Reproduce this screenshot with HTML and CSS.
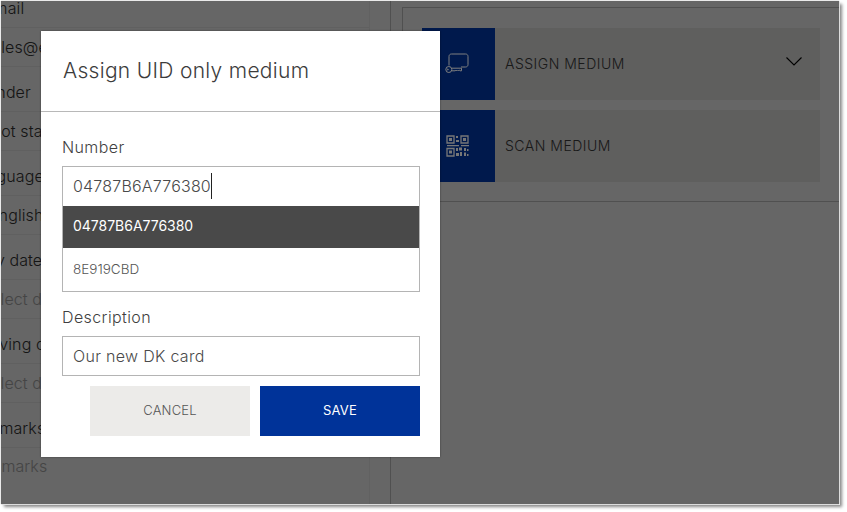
FILE: index.html
```html
<!DOCTYPE html>
<html lang="en">
<head>
<meta charset="utf-8">
<title>Assign UID only medium</title>
<link rel="stylesheet" href="styles.css">
</head>
<body>
<div class="window">
  <div class="page">
    <aside class="details">
      <div class="row first off-a">Email</div>
      <div class="row value off-b">sales@example.com</div>
      <div class="row label off-c">Gender</div>
      <div class="row value off-d">Not stated</div>
      <div class="row label off-e">Language</div>
      <div class="row value off-f">English</div>
      <div class="row label off-g">Expiry date</div>
      <div class="row value muted off-h">Select date</div>
      <div class="row label off-i">Leaving date</div>
      <div class="row value muted off-h">Select date</div>
      <div class="row label off-j">Remarks</div>
      <div class="row value muted last off-k">Remarks</div>
    </aside>
    <div class="gutter"></div>
    <main class="media">
      <div class="tiles">
        <div class="tile">
          <div class="tile-icon">
            <svg class="icon" viewBox="0 0 24 22" width="24" height="22" fill="none" stroke="#fff" stroke-width="1">
              <path d="M4 12.500V3.500C4 2 5 1 6.500 1h14C22 1 23 2 23 3.500v8c0 1.500-1 2.500-2.500 2.500H16"/>
              <circle cx="3.800" cy="16.500" r="3"/>
              <path d="M7 15.200h9.500v2.600h-1.500l-.8-.8-.8.8-.8-.8-.8.8-.8-.8-.8.8H7"/>
              <circle cx="2.800" cy="16.500" r=".5"/>
            </svg>
          </div>
          <div class="tile-label">ASSIGN MEDIUM</div>
          <svg class="chevron" viewBox="0 0 16 9" width="16" height="9" fill="none" stroke="#000" stroke-width="1.100"><path d="M.5.500 8 8l7.500-7.500"/></svg>
        </div>
        <div class="tile">
          <div class="tile-icon">
            <svg class="icon" viewBox="0 0 23 22" width="23" height="22" fill="none" stroke="#eee" stroke-width="1.300">
              <path d="M1 1h7v7H1zM15 1h7v7h-7zM1 13.500h7v7.500H1z"/>
              <path fill="#eee" stroke="none" d="M3 3h3v3H3zM17 3h3v3h-3zM3 15.500h3v3H3zM10 1h2v2h-2zM10 5h3v2h-3zM1 10h12v1.300H1zM15 10h8v1.300h-8zM10 13h2v3h-2zM13 12.500h3v3h-3zM10 18h3v3h-3zM14 17h2v4h-2zM18 13h2v3h-2zM18 17.500h2v3.500h-2zM21 14h1.500v2H21zM21 19h1.500v2H21z"/>
            </svg>
          </div>
          <div class="tile-label">SCAN MEDIUM</div>
        </div>
      </div>
    </main>
  </div>
  <div class="overlay"></div>
  <section class="modal">
    <header class="modal-head"><h1 class="modal-title">Assign UID only medium</h1></header>
    <div class="modal-body">
      <div class="field-label label-number">Number</div>
      <div class="combo">
        <div class="input"><span>04787B6A776380</span><span class="caret"></span></div>
        <div class="option active">04787B6A776380</div>
        <div class="option second">8E919CBD</div>
      </div>
      <div class="field-label label-desc">Description</div>
      <div class="input solo"><span>Our new DK card</span></div>
      <div class="actions">
        <div class="btn cancel">CANCEL</div>
        <div class="btn save">SAVE</div>
      </div>
    </div>
  </section>
</div>
</body>
</html>
```
FILE: styles.css
```css
* { box-sizing: border-box; }
html, body { margin: 0; height: 100%; background: #fff; overflow: hidden; }
body { padding: 1px 0 0 1px; font-family: Inter, "Noto Sans", sans-serif; font-weight: 300; color: #333; }

.window { position: relative; width: 838px; height: 503px; overflow: hidden; background: #cccccc; }
.window { box-shadow: 0 0 1px #888, 1px 1px 0 #eee, 3px 3px 3px #888; }
.page { display: flex; height: 100%; }

.details { width: 369px; flex: none; border-right: 1px solid #c2c2c2; overflow: hidden; }
.row { display: flex; align-items: center; white-space: nowrap; font-size: 16px; letter-spacing: .1px; color: #2a2a2a; border-bottom: 1px solid #c0c0c0; }
.first { height: 27px; align-items: flex-start; line-height: 15px; }
.value { height: 39px; }
.label { height: 45px; padding-top: 6px; }
.muted { color: #8a8a8a; }
.last { border-bottom: 0; padding-bottom: 3px; }
.off-a { margin-left: -17px; }
.off-b { margin-left: -17px; }
.off-c { margin-left: -26px; }
.off-d { margin-left: -12px; }
.off-e { margin-left: -32px; }
.off-f { margin-left: -12px; }
.off-g { margin-left: -43px; }
.off-h { margin-left: -20px; }
.off-i { margin-left: -29px; }
.off-j { margin-left: -21px; }
.off-k { margin-left: -19px; }

.gutter { width: 21px; flex: none; border-right: 1px solid #a0a0a0; }

.media { flex: 1; padding: 6px 0 0 11px; }
.tiles { display: flex; flex-direction: column; gap: 10px; padding: 20px 19px 19px 19px; border-top: 1px solid #a0a0a0; border-bottom: 1px solid #a0a0a0; border-left: 1px solid #a0a0a0; }
.tile { position: relative; display: flex; align-items: stretch; height: 72px; background: #bebebc; }
.tile-icon { width: 73px; flex: none; display: flex; align-items: center; justify-content: center; padding-right: 3px; background: #003399; }
.tile-label { display: flex; align-items: center; padding: 0 0 2px 10px; font-size: 14px; letter-spacing: .5px; color: #333; }
.chevron { position: absolute; top: 29px; right: 18px; }

.overlay { position: absolute; inset: 0; background: rgba(0, 0, 0, .5); }

.modal { position: absolute; left: 40px; top: 30px; width: 399px; height: 426px; background: #fff; box-shadow: 0 0 2px rgba(0, 0, 0, .4); }
.modal-head { height: 81px; display: flex; align-items: center; padding: 0 22px 2px; border-bottom: 1px solid #b8b8b8; }
.modal-title { margin: 0; font-size: 21px; font-weight: 300; color: #3c3c3c; letter-spacing: .3px; }
.modal-body { padding: 0 20px 0 21px; }
.field-label { font-size: 16px; line-height: 20px; letter-spacing: .4px; color: #3f3f3f; }
.label-number { margin-top: 25px; margin-bottom: 9px; }
.label-desc { margin-top: 15px; margin-bottom: 9px; }
.combo { border: 1px solid #b4b4b4; }
.combo .input { border: 0; height: 39px; letter-spacing: .2px; }
.input { display: flex; align-items: center; height: 40px; padding: 0 0 1px 10px; font-size: 16px; letter-spacing: .3px; color: #4a4a4a; background: #fff; }
.input.solo { border: 1px solid #b4b4b4; }
.caret { width: 1px; height: 26px; background: #222; }
.option { display: flex; align-items: center; height: 42px; padding: 0 0 3px 10px; font-size: 14px; color: #555; background: #fff; }
.option.active { background: #494949; color: #fff; font-weight: 400; letter-spacing: -.02px; }
.option.second { height: 43px; font-size: 13.500px; padding-bottom: 1px; }
.actions { display: flex; justify-content: flex-end; gap: 10px; margin-top: 10px; }
.btn { width: 160px; height: 50px; display: flex; align-items: center; justify-content: center; padding-bottom: 2px; font-size: 13px; letter-spacing: .2px; }
.cancel { background: #ecebe9; color: #555; }
.save { background: #003399; color: #fff; font-weight: 400; }
```
